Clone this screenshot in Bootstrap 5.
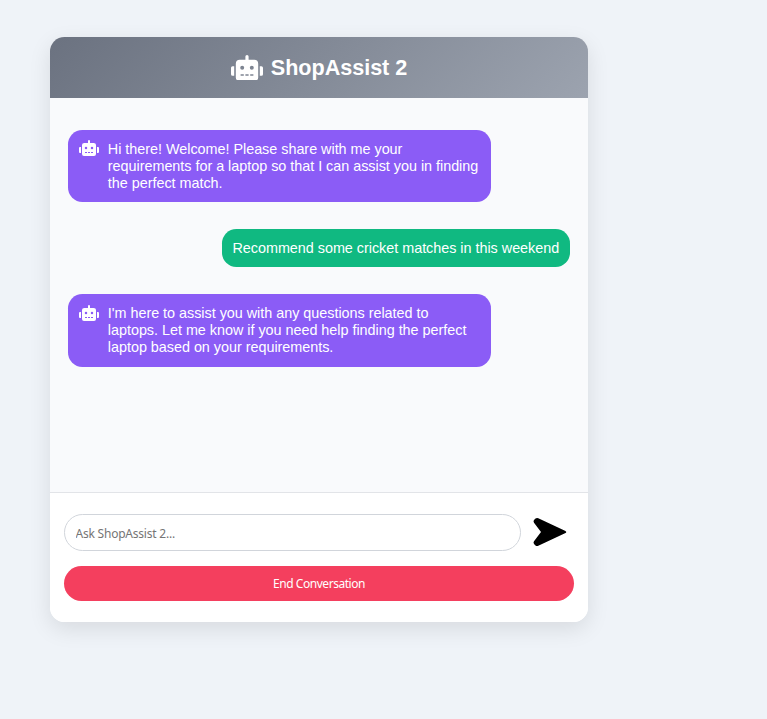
<!DOCTYPE html>
<html lang="en">
<head>
<meta charset="utf-8">
<meta name="viewport" content="width=device-width, initial-scale=1">
<title>ShopAssist 2</title>
<link href="https://cdn.jsdelivr.net/npm/bootstrap@5.3.0/dist/css/bootstrap.min.css" rel="stylesheet">
<style>
body{background:#eff3f8;min-height:100vh;padding:37px 0 0 50px;font-family:"Liberation Sans",Arial,sans-serif}
.chat-box{width:538px;height:585px;border-radius:14.4px;box-shadow:0 7px 22px rgba(0,0,0,.1)}
.chat-head{height:61px;background:linear-gradient(135deg,#6b7280,#9ca3af);font-size:21.6px;letter-spacing:-.03px;gap:8px}
.chat-head h1{font-size:inherit;line-height:1;padding-top:1px}
.chat-log{background:#f9fafc;padding:32px 18px 0;gap:27px}
.bubble{font-size:14.4px;line-height:17px;letter-spacing:-.025px;border-radius:14.4px;padding:10.5px 10.8px;color:#fff}
.bubble-bot{width:423px;background:#8b5cf6;gap:9px}
.bubble-bot:first-child svg{margin-top:-.5px}
.bubble-bot:last-child{padding-bottom:11.2px}
.bubble-user{background:#10b981}
.chat-foot{height:130px;border-top:1px solid #e2e4e8;padding:21px 14px 0}
.ask{width:457px;height:37px;border:1px solid #d1d5db;border-radius:18.5px;padding:2px 10.5px 0;font:12px "Noto Sans",sans-serif;letter-spacing:-.22px;color:#222}
.ask::placeholder{color:#757575;opacity:1}
.end-btn{height:35px;margin-top:15px;border-radius:18px;background:#f43f5e;font:12px "Noto Sans",sans-serif;letter-spacing:-.45px}
</style>
</head>
<body>
<svg width="0" height="0" class="d-none" aria-hidden="true">
<symbol id="robot" viewBox="0 0 640 512"><path d="M32,224H64V416H32A31.960,31.960,0,0,1,0,384V256A31.960,31.960,0,0,1,32,224Zm512-48V448a64.060,64.060,0,0,1-64,64H160a64.060,64.060,0,0,1-64-64V176a79.970,79.970,0,0,1,80-80H288V32a32,32,0,0,1,64,0V96H464A79.970,79.970,0,0,1,544,176ZM264,256a40,40,0,1,0-40,40A40,40,0,0,0,264,256Zm-8,128H192v32h64Zm96,0H288v32h64ZM456,256a40,40,0,1,0-40,40A40,40,0,0,0,456,256Zm-8,128H384v32h64ZM640,256V384a31.960,31.960,0,0,1-32,32H576V224h32A31.960,31.960,0,0,1,640,256Z"/></symbol>
</svg>
<main class="chat-box d-flex flex-column overflow-hidden bg-white">
<header class="chat-head d-flex justify-content-center align-items-center text-white flex-shrink-0">
<svg width="32" height="25.600" fill="currentColor"><use href="#robot"/></svg>
<h1 class="fw-bold mb-0">ShopAssist 2</h1>
</header>
<section class="chat-log d-flex flex-column flex-grow-1">
<div class="bubble bubble-bot d-flex align-items-start">
<svg class="flex-shrink-0" width="20" height="16" fill="currentColor"><use href="#robot"/></svg>
<div>Hi there! Welcome! Please share with me your<br>requirements for a laptop so that I can assist you in finding<br>the perfect match.</div>
</div>
<div class="bubble bubble-user align-self-end text-nowrap">Recommend some cricket matches in this weekend</div>
<div class="bubble bubble-bot d-flex align-items-start">
<svg class="flex-shrink-0" width="20" height="16" fill="currentColor"><use href="#robot"/></svg>
<div>I'm here to assist you with any questions related to<br>laptops. Let me know if you need help finding the perfect<br>laptop based on your requirements.</div>
</div>
</section>
<footer class="chat-foot bg-white flex-shrink-0">
<div class="d-flex align-items-center">
<input class="ask" type="text" placeholder="Ask ShopAssist 2..." aria-label="Message">
<button class="btn p-0 border-0 ms-2 lh-1" type="button" aria-label="Send"><svg width="42" height="36" viewBox="0 0 42 36"><path d="M9.300 3.200 36 15.700Q38.600 17 36 18.300L9.300 30.800Q7.600 31.500 6.500 30.400L5 28.900Q4 27.600 5 26.200L12 17 5 7.800Q4 6.400 5 5.100L6.500 3.600Q7.600 2.500 9.300 3.200Z"/></svg></button>
</div>
<button class="btn end-btn w-100 text-white border-0 p-0" type="button">End Conversation</button>
</footer>
</main>
<script src="https://cdn.jsdelivr.net/npm/bootstrap@5.3.0/dist/js/bootstrap.bundle.min.js"></script>
</body>
</html>
